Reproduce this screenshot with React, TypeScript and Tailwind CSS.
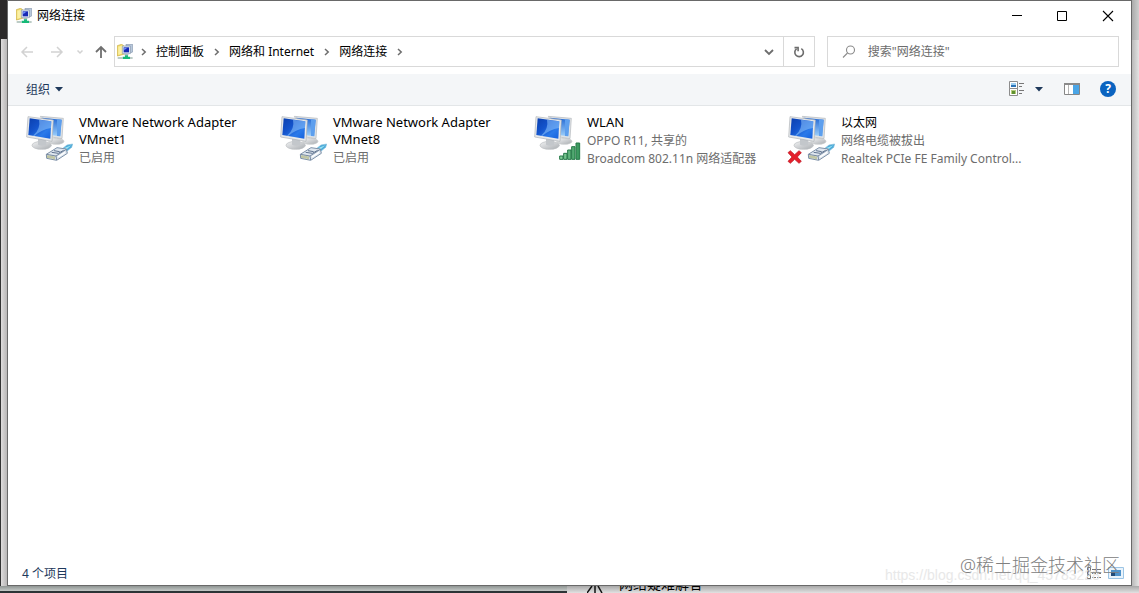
import React from 'react';
import clsx from 'clsx';

type Badge = 'cable' | 'signal' | 'unplugged';

interface Adapter {
  name: string;
  lines: string[];
  badge: Badge;
}

const adapters: Adapter[] = [
  { name: 'VMware Network Adapter VMnet1', lines: ['已启用'], badge: 'cable' },
  { name: 'VMware Network Adapter VMnet8', lines: ['已启用'], badge: 'cable' },
  { name: 'WLAN', lines: ['OPPO R11, 共享的', 'Broadcom 802.11n 网络适配器'], badge: 'signal' },
  { name: '以太网', lines: ['网络电缆被拔出', 'Realtek PCIe FE Family Control...'], badge: 'unplugged' },
];

const crumbs = ['控制面板', '网络和 Internet', '网络连接'];

// Latin-only names are set one step larger than the Chinese ones
const isLatin = (text: string) => /^[\x20-\x7e]+$/.test(text);

const FolderNetIcon = () => (
  <svg width="16" height="16" viewBox="0 0 48 48" className="shrink-0" aria-hidden="true">
    <path d="M1 5 14 1l6 4v26L1 36Z" fill="#f3df72" stroke="#c9a936" strokeWidth="2" />
    <path d="M4 8 15 5v24L4 32Z" fill="#fbf0a4" />
    <path d="M27 1h20v23l-8 3V7H27Z" fill="#b8c8dc" stroke="#8797ad" strokeWidth="2" />
    <path d="M16 6h24v23H16Z" fill="#dce6f1" stroke="#8998ad" strokeWidth="2" />
    <path d="M20 10h16v15H20Z" fill="#1628b4" />
    <path d="M21 11h10l-9 8Z" fill="#6f91ff" />
    <path d="M22 30h12v4H22Z" fill="#a9b4bd" />
    <path d="M24 34h9v4h6v7H17v-7h7Z" fill="#16b978" />
    <path d="M2 40h15v4H2ZM39 40h8v4h-8Z" fill="#a7bcb4" />
  </svg>
);

const CablePlug = () => (
  <g strokeLinejoin="round">
    <path d="m111 105 15-12 17-3-3 10-16 13Z" fill="#4aa9d8" stroke="#87bfdc" strokeWidth="2" />
    <path d="m118 102 21-8-17 14Z" fill="#9be5f5" />
    <path d="m64 121 32-20 28 4 3 13-32 21-30-6Z" fill="#dfe7ef" stroke="#7e91a8" strokeWidth="3" />
    <path d="m64 121 29 5 31-20M93 126l2 12" fill="none" stroke="#7688a0" strokeWidth="3" />
    <path d="m80 115 20 3 16-9M87 110l17 3" fill="none" stroke="#5f738f" strokeWidth="3" />
    <path d="M69 124v8m6-7v8m6-7v8m6-7v9" stroke="#a3a65b" strokeWidth="3" />
    <path d="m99 129 21-14" stroke="#fff" strokeWidth="4" />
  </g>
);

const SignalBars = () => (
  <g fill="url(#bar)" stroke="#247847" strokeWidth="3">
    <path d="M80 126h10v10H80ZM92 118h10v18H92ZM104 108h10v28h-10ZM116 98h10v38h-10ZM129 87h11v49h-11Z" />
  </g>
);

const AdapterIcon = ({ badge }: { badge: Badge }) => (
  <svg width="48" height="50" viewBox="0 0 144 150" className="shrink-0" aria-hidden="true">
    <defs>
      <linearGradient id="screen" x1="0" y1="0" x2="1" y2="1">
        <stop offset="0" stopColor="#0b3fae" />
        <stop offset="0.4" stopColor="#1454cc" />
        <stop offset="0.7" stopColor="#2a7aea" />
        <stop offset="1" stopColor="#1560dc" />
      </linearGradient>
      <linearGradient id="rear" x1="0" y1="0" x2="0" y2="1">
        <stop offset="0" stopColor="#2268d4" />
        <stop offset="1" stopColor="#9ed0fb" />
      </linearGradient>
      <linearGradient id="stand" x1="0" y1="0" x2="1" y2="1">
        <stop offset="0" stopColor="#f2f3f4" />
        <stop offset="1" stopColor="#a9adb1" />
      </linearGradient>
      <linearGradient id="bar" x1="0" y1="0" x2="1" y2="0">
        <stop offset="0" stopColor="#8fd6a2" />
        <stop offset="1" stopColor="#35945a" />
      </linearGradient>
    </defs>
    <ellipse cx="94" cy="82" rx="23" ry="9" fill="url(#stand)" stroke="#c5c8ca" strokeWidth="2" />
    <path d="m46 7 69 6-4 61-32-5Z" fill="#dfe2e5" stroke="#b2b7bb" strokeWidth="2" />
    <path d="m51 11 59 6-4 50-25-3Z" fill="url(#rear)" />
    <path d="m96 16 14 1-4 50-10-1Z" fill="#5d9fee" />
    <ellipse cx="50" cy="94" rx="29" ry="12" fill="url(#stand)" stroke="#b9bdc0" strokeWidth="2" />
    <path d="m39 72 24 5 1 15q-13 6-25 0Z" fill="#c3c7cb" />
    <path d="m9 8 76 10-4 64L5 69Z" fill="#e7e9eb" stroke="#adb2b7" strokeWidth="2" />
    <path d="m14 13 65 9-3 52-66-11Z" fill="url(#screen)" />
    <path d="m42 17 37 5-1 20Q50 46 28 66l-4-1q24-20 18-48Z" fill="#86bcf9" opacity=".6" />
    {badge === 'signal' ? <SignalBars /> : <CablePlug />}
    {badge === 'unplugged' && (
      <path d="m10 110 13 12 13-12 7 6-12 13 12 13-7 6-13-12-13 12-7-6 12-13-12-13Z" fill="#e51f2b" stroke="#b90e1b" strokeWidth="2" />
    )}
  </svg>
);

const Chevron = () => (
  <svg width="6" height="8" viewBox="0 0 6 8" className="shrink-0" fill="none" stroke="#6d6d6d" strokeWidth="1.5" aria-hidden="true">
    <path d="m1 1 3.2 3L1 7" />
  </svg>
);

const TitleBar = () => (
  <header className="flex h-[30px] shrink-0 items-center pl-2">
    <FolderNetIcon />
    <h1 className="ml-[5px] flex-1 text-black">网络连接</h1>
    <button aria-label="最小化" className="flex h-full w-[45px] items-center justify-center">
      <svg width="12" height="12" stroke="#000"><path d="M1 5.5h10" /></svg>
    </button>
    <button aria-label="最大化" className="flex h-full w-[45px] items-center justify-center">
      <svg width="12" height="12" fill="none" stroke="#000"><path d="M1.5 1.5h9v9h-9Z" /></svg>
    </button>
    <button aria-label="关闭" className="flex h-full w-[47px] items-center justify-center">
      <svg width="12" height="12" stroke="#000" strokeWidth="1.1"><path d="m1 1 10 10M11 1 1 11" /></svg>
    </button>
  </header>
);

const AddressBar = () => (
  <nav className="flex h-[43px] shrink-0 items-center pr-3 pb-0.5 pl-[11px]">
    <button aria-label="后退" className="flex w-4 justify-center">
      <svg width="14" height="12" fill="none" stroke="#d2d2d2" strokeWidth="1.5"><path d="M13 6H2m5-5L2 6l5 5" /></svg>
    </button>
    <button aria-label="前进" className="ml-[14px] flex w-4 justify-center">
      <svg width="14" height="12" fill="none" stroke="#d2d2d2" strokeWidth="1.5"><path d="M1 6h11M7 1l5 5-5 5" /></svg>
    </button>
    <button aria-label="最近浏览的位置" className="ml-[9px] flex w-3 justify-center">
      <svg width="8" height="6" fill="none" stroke="#d2d2d2" strokeWidth="1.5"><path d="m1.5 1.5 2.5 2.5 2.5-2.5" /></svg>
    </button>
    <button aria-label="上移" className="ml-[7px] flex w-4 justify-center">
      <svg width="14" height="14" fill="none" stroke="#6f6f6f" strokeWidth="1.8"><path d="M7 13V2M2 7l5-5 5 5" /></svg>
    </button>
    <div className="ml-[5px] flex h-[31px] flex-[701] items-center border border-[#d9d9d9] bg-white pl-[2px]">
      <FolderNetIcon />
      <ol className="flex flex-1 items-center">
        <li className="ml-2 flex"><Chevron /></li>
        {crumbs.map((crumb) => (
          <li key={crumb} className="ml-[9px] flex items-center gap-[10px] text-black">
            <a href="#" className="whitespace-nowrap">{crumb}</a>
            <Chevron />
          </li>
        ))}
      </ol>
      <button aria-label="以前的位置" className="flex h-full w-7 items-center justify-center">
        <svg width="10" height="8" fill="none" stroke="#6d6d6d" strokeWidth="1.8"><path d="m1 2 4 4 4-4" /></svg>
      </button>
      <button aria-label="刷新" className="flex h-full w-[31px] items-center justify-center border-l border-[#d9d9d9]">
        <svg width="12" height="12" fill="none" stroke="#6d6d6d" strokeWidth="1.6">
          <path d="M8.3 2.6A4.3 4.3 0 1 1 3.6 2.8" />
          <path d="M1.5 1.6h3.6v3.6" />
        </svg>
      </button>
    </div>
    <label className="ml-3 flex h-[31px] flex-[292] items-center border border-[#d9d9d9] bg-white">
      <svg width="14" height="14" className="ml-[14px] shrink-0" fill="none" stroke="#8a8a8a" strokeWidth="1.1" aria-hidden="true">
        <circle cx="8.5" cy="5" r="4" />
        <path d="m5.5 8-4.5 4.5" />
      </svg>
      <input
        type="search"
        aria-label="搜索"
        placeholder={'搜索"网络连接"'}
        className="ml-3 w-full min-w-0 bg-transparent outline-none placeholder:text-[#6d6d6d]"
      />
    </label>
  </nav>
);

const Toolbar = () => (
  <div className="flex h-8 shrink-0 items-center border-b border-[#e3e6e8] bg-[#f4f6f8] pr-[15px] pb-px pl-[18px] text-[#1e395b]">
    <button className="flex items-center gap-[5px] pt-px">
      组织
      <svg width="8" height="5" fill="#1e395b"><path d="M0 0h8L4 4.5Z" /></svg>
    </button>
    <button aria-label="更改视图" className="ml-auto flex">
      <svg width="16" height="16" fill="none">
        <path d="M.5.5h8v7h-8ZM.5 7.5h8v7h-8Z" fill="#fff" stroke="#8c8c8c" />
        <path d="M2 2h5v4H2Z" fill="#9fd0f2" />
        <path d="M2 4h5v2H2Z" fill="#2c74b8" />
        <path d="M2 9h5v4H2Z" fill="#b5cc7c" />
        <path d="M3 10h3v3H3Z" fill="#5f9130" />
        <path d="M10 2.5h5M10 5.5h3M10 9.5h5M10 12.5h3" stroke="#777" />
      </svg>
    </button>
    <button aria-label="更多选项" className="ml-[10px] flex">
      <svg width="8" height="5" fill="#1e395b"><path d="M0 0h8L4 4.5Z" /></svg>
    </button>
    <button aria-label="显示预览窗格" className="ml-[21px] flex">
      <svg width="16" height="12">
        <path d="M.5.5h15v11H.5Z" fill="#fff" stroke="#868686" />
        <path d="M0 0h16v2H0Z" fill="#8a8a8a" />
        <path d="M4.5 2v9" stroke="#b5b5b5" />
        <path d="M9 2h6v9H9Z" fill="#4aa5e6" />
      </svg>
    </button>
    <button aria-label="帮助" className="ml-5 flex size-4 items-center justify-center rounded-full bg-[#0a63c0] font-bold text-white">
      ?
    </button>
  </div>
);

const AdapterTile = ({ adapter }: { adapter: Adapter }) => (
  <li className="flex w-[254px] items-start gap-[6px]">
    <AdapterIcon badge={adapter.badge} />
    <div className="w-[194px] text-[#6d6d6d]">
      <p className={clsx('mb-px max-w-[180px] leading-[17px] text-black', isLatin(adapter.name) && 'text-[13px]')}>
        {adapter.name}
      </p>
      {adapter.lines.map((line) => (
        <p key={line} className="truncate leading-[18px]">{line}</p>
      ))}
    </div>
  </li>
);

const StatusBar = () => (
  <footer className="flex h-6 shrink-0 items-center justify-between pr-[7px] pl-[14px] text-[#1e395b]">
    <span className="pt-0.5">4 个项目</span>
    <div className="flex gap-[6px]">
      <button aria-label="详细信息">
        <svg width="16" height="12" fill="none" stroke="#777">
          <path d="M1.5.5h3v3h-3ZM1.5 4.5h3v3h-3ZM1.5 8.5h3v3h-3ZM6 2.5h4m1 0h4M6 6.5h4m1 0h4M6 10.5h4m1 0h4" />
        </svg>
      </button>
      <button aria-label="大图标">
        <svg width="16" height="12">
          <path d="M.5.5h15v11H.5Z" fill="#e9f3fb" stroke="#9cc5e5" />
          <path d="M3 3h10v6H3Z" fill="#4d92ca" />
          <path d="M3 5h4v4H3Z" fill="#214b78" />
        </svg>
      </button>
    </div>
  </footer>
);

const App: React.FC = () => (
  <div className="flex h-screen flex-col overflow-hidden bg-[#dcdcdc] font-['Noto_Sans','Noto_Sans_CJK_SC',sans-serif] text-xs">
    <div className="flex min-h-0 flex-1">
      <div className="flex w-[7px] shrink-0 flex-col">
        <div className="h-[39px] bg-[#2b2929]" />
        <div className="flex-1 border-l border-[#333] bg-linear-to-r from-[#dedcdc] to-[#b8b6b6]" />
      </div>
      <main className="relative flex min-w-0 flex-1 flex-col border border-[#696969] bg-white">
        <TitleBar />
        <AddressBar />
        <Toolbar />
        <ul className="flex flex-1 flex-wrap content-start pt-2 pl-[17px]">
          {adapters.map((adapter) => (
            <AdapterTile key={adapter.name} adapter={adapter} />
          ))}
        </ul>
        <StatusBar />
        <div className="pointer-events-none absolute right-0 bottom-0 h-8 w-[250px] overflow-hidden whitespace-nowrap">
          <span className="absolute bottom-0 left-1 font-['Liberation_Sans',sans-serif] text-sm text-[#e8e8e8]">https://blog.csdn.net/qq_45783228</span>
          <span className="absolute right-[11px] bottom-2 text-lg leading-6 font-light text-[#808080]">@稀土掘金技术社区</span>
        </div>
      </main>
      <div className="flex w-[7px] shrink-0 flex-col bg-linear-to-r from-[#b9b9b9] to-[#e4e4e4]">
        <div className="h-10 bg-linear-to-r from-[#aaaaaa] to-[#cfcfcf]" />
      </div>
    </div>
    <div className="flex h-[7px] shrink-0 overflow-hidden">
      <div className="h-full w-[567px] border-b-2 border-[#2c3436] bg-linear-to-b from-[#8f9593] to-[#c4c9c7]" />
      <div className="flex flex-1 items-end bg-linear-to-b from-[#a8a8a8] to-[#e2e2e2] pl-5">
        <svg width="16" height="7" fill="none" stroke="#111" strokeWidth="1.5" className="shrink-0">
          <path d="M0 7 5 0M11 0l4 7M8 0v7" />
        </svg>
        <span className="mb-px ml-4 text-sm leading-4 text-black">网络疑难解答</span>
      </div>
    </div>
  </div>
);

export default App;
